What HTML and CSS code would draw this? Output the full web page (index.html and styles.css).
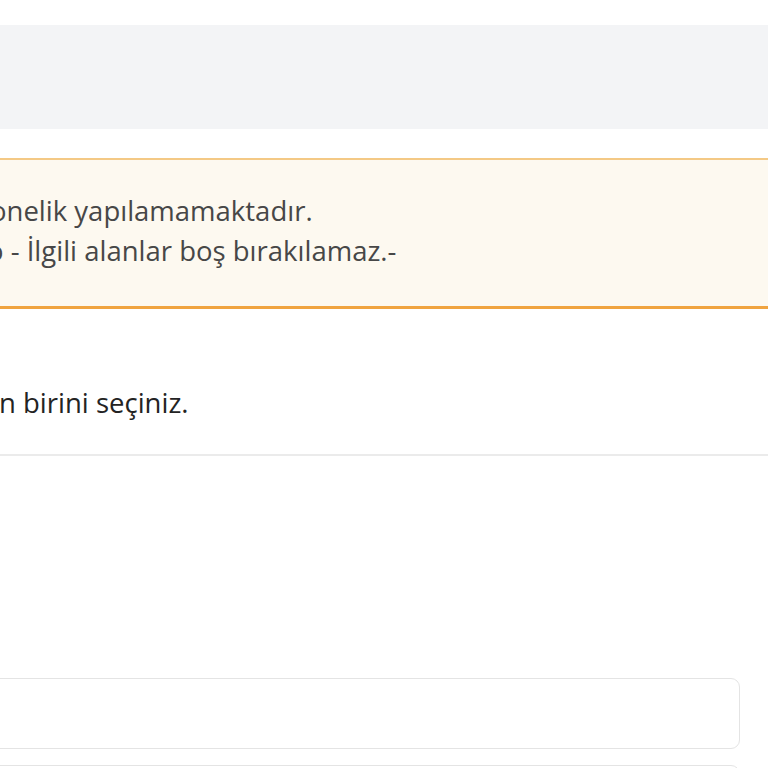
FILE: index.html
```html
<!DOCTYPE html>
<html lang="tr">
<head>
<meta charset="utf-8">
<title>Abonelik</title>
<link rel="stylesheet" href="styles.css">
</head>
<body>
<div class="page">
  <div class="band"></div>
  <div class="alert">
    <p class="line line-one"><span class="cut">Şu anda ab</span><span class="shown">onelik yapılamamaktadır.</span></p>
    <p class="line line-two"><span class="cut">Lütfen formu kontrol ediniz, hata ko</span><span class="shown">o - İlgili alanlar boş bırakılamaz.-</span></p>
  </div>
  <div class="section">
    <p class="line prompt"><span class="cut">Aşağıdaki seçeneklerde</span><span class="shown">n birini seçiniz.</span></p>
  </div>
  <div class="form">
    <div class="field"></div>
    <div class="field"></div>
  </div>
</div>
</body>
</html>
```
FILE: styles.css
```css
html, body {
  margin: 0;
  padding: 0;
  background: #ffffff;
}
body {
  width: 768px;
  height: 768px;
  overflow: hidden;
  font-family: "Open Sans", "Liberation Sans", sans-serif;
}
.page {
  width: 768px;
  overflow: hidden;
  padding-top: 25px;
}
.band {
  height: 104px;
  background: #f3f4f6;
}
.alert {
  margin-top: 29px;
  background: #fdf9f0;
  border-top: 2px solid #f4c985;
  border-bottom: 3px solid #f0a440;
  padding: 31px 0 35px 0;
}
.line {
  margin: 0;
  display: flex;
  white-space: nowrap;
  font-size: 27.5px;
}
.cut {
  flex: none;
  width: 600px;
  margin-left: -600px;
  text-align: right;
}
.shown {
  flex: none;
}
.alert .line {
  line-height: 40px;
  color: #474747;
}
.line-one .shown {
  margin-left: -10px;
}
.line-two .shown {
  margin-left: -13px;
}
.section {
  padding-top: 76px;
  padding-bottom: 33px;
  border-bottom: 2px solid #ebebeb;
}
.prompt {
  line-height: 36px;
  color: #232323;
}
.prompt .shown {
  margin-left: -1px;
}
.form {
  padding-top: 222px;
  margin-left: -40px;
  margin-right: 28px;
  display: flex;
  flex-direction: column;
  gap: 16px;
}
.field {
  height: 69px;
  border: 1.5px solid #e4e4e4;
  border-radius: 9px;
  background: #ffffff;
}
```
